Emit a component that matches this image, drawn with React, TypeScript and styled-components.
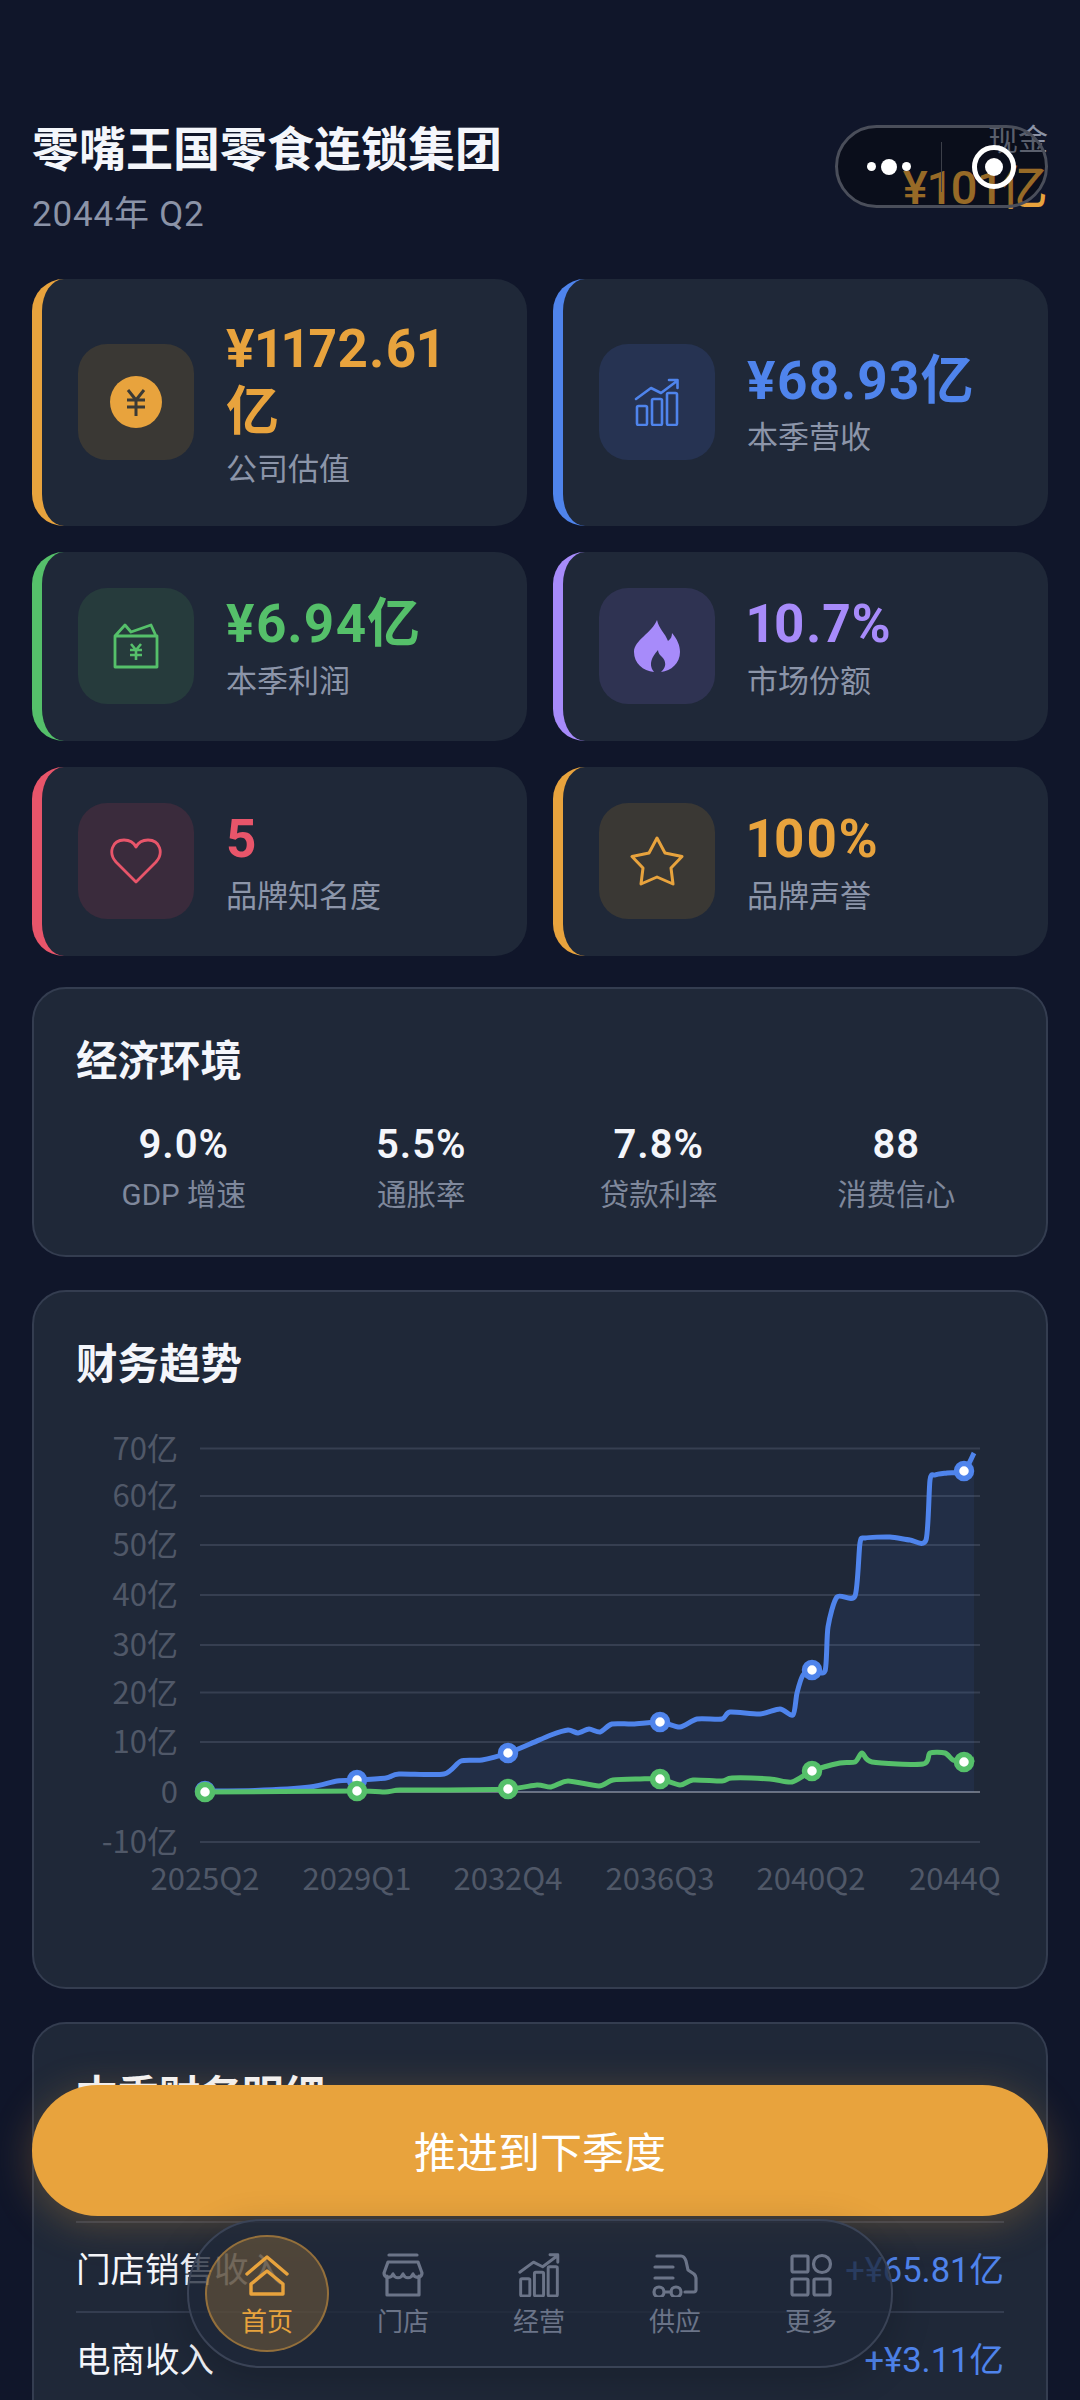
import React from 'react'
import styled, { createGlobalStyle } from 'styled-components'

const ORANGE = '#e8a33d'
const BLUE = '#4f84ec'
const GREEN = '#55c06a'
const PURPLE = '#a78bfa'
const RED = '#e8556a'

const GlobalStyle = createGlobalStyle`
  html, body {
    margin: 0;
    padding: 0;
    background: #10162a;
  }
  * {
    box-sizing: border-box;
  }
`

const Page = styled.div`
  position: relative;
  width: 1080px;
  height: 2400px;
  overflow: hidden;
  padding: 120px 32px 0;
  background: #10162a;
  font-family: Roboto, 'Noto Sans CJK SC', sans-serif;
  color: #f4f6fb;
`

const Header = styled.header`
  display: flex;
  justify-content: space-between;
  align-items: flex-start;
  margin-bottom: 40px;
`

const CompanyName = styled.h1`
  margin: 0;
  font-size: 47px;
  line-height: 60px;
  font-weight: 700;
`

const Period = styled.div`
  margin-top: 11px;
  font-size: 35px;
  line-height: 48px;
  letter-spacing: 0.8px;
  color: #8b93a7;
`

const CashBlock = styled.div`
  display: flex;
  flex-direction: column;
  align-items: flex-end;
`

const CashLabel = styled.div`
  font-size: 30px;
  line-height: 40px;
  color: #8b93a7;
`

const CashValue = styled.div`
  margin-top: -2px;
  font-size: 47px;
  line-height: 60px;
  font-weight: 500;
  letter-spacing: 0.5px;
  font-variant-numeric: proportional-nums;
  color: ${ORANGE};
`

const Capsule = styled.div`
  position: absolute;
  top: 125px;
  right: 32px;
  width: 213px;
  height: 83px;
  border: 3px solid #4a4e5a;
  border-radius: 42px;
  background: rgba(0, 0, 0, 0.35);
  display: flex;
  align-items: center;
`

const CapsuleSide = styled.div`
  width: 104px;
  display: flex;
  align-items: center;
  justify-content: center;
  gap: 5px;
`

const Dot = styled.span<{ $size: number }>`
  width: ${(p) => p.$size}px;
  height: ${(p) => p.$size}px;
  border-radius: 50%;
  background: #fff;
`

const CapsuleDivider = styled.span`
  width: 2px;
  height: 50px;
  background: #3c3f49;
`

const StatGrid = styled.div`
  display: grid;
  grid-template-columns: 1fr 1fr;
  gap: 26px;
  margin-bottom: 31.5px;
`

const StatCard = styled.div<{ $accent: string }>`
  display: flex;
  align-items: center;
  gap: 32px;
  min-height: 189px;
  padding: 36px;
  border-left: 10px solid ${(p) => p.$accent};
  border-radius: 32px;
  background: #1f2838;
`

const StatIcon = styled.div<{ $tint: string }>`
  flex: none;
  width: 116px;
  height: 116px;
  border-radius: 29px;
  background: ${(p) => p.$tint};
  display: flex;
  align-items: center;
  justify-content: center;
`

const StatValue = styled.div<{ $accent: string }>`
  max-width: 250px;
  padding-top: 3px;
  font-size: 53px;
  line-height: 63px;
  font-weight: 700;
  letter-spacing: 1px;
  font-variant-numeric: proportional-nums;
  color: ${(p) => p.$accent};
`

const StatLabel = styled.div`
  margin-top: 5.5px;
  font-size: 31px;
  line-height: 40px;
  color: #8c95a9;
`

const Section = styled.section`
  margin-bottom: 33px;
  padding: 46px 42px 41px;
  border: 2px solid #343d50;
  border-radius: 34px;
  background: #1f2838;
`

const SectionTitle = styled.h2`
  margin: 0;
  font-size: 41.5px;
  line-height: 54px;
  font-weight: 700;
`

const EconRow = styled.div`
  display: grid;
  grid-template-columns: repeat(4, 1fr);
  margin: 31px -11px 0;
`

const EconItem = styled.div`
  text-align: center;
`

const EconValue = styled.div`
  font-size: 40px;
  line-height: 50px;
  font-weight: 600;
  letter-spacing: 1px;
`

const EconLabel = styled.div`
  margin-top: 6px;
  font-size: 29.5px;
  line-height: 38px;
  color: #7f889c;
`

const ChartSvg = styled.svg`
  display: block;
  margin-top: 12px;
  font-family: 'Noto Sans CJK SC', sans-serif;
`

const DetailRow = styled.div`
  display: flex;
  justify-content: space-between;
  align-items: center;
  height: 90px;
  border-top: 2px solid #343d50;
  font-size: 34.5px;
`

const DetailValue = styled.span`
  color: ${BLUE};
  font-weight: 400;
`

const DetailList = styled.div`
  margin-top: 97px;
`

const AdvanceButton = styled.button`
  position: absolute;
  left: 32px;
  bottom: 184px;
  width: 1016px;
  height: 131px;
  padding: 0 0 3px;
  border: 0;
  border-radius: 66px;
  background: ${ORANGE};
  box-shadow: 0 8px 40px rgba(232, 163, 61, 0.28);
  color: #fff;
  font-family: inherit;
  font-size: 42px;
  font-weight: 400;
`

const BottomNav = styled.nav`
  position: absolute;
  left: 187px;
  bottom: 32px;
  width: 706px;
  height: 149px;
  padding: 14px 10px;
  display: flex;
  border: 2px solid #3a4356;
  border-radius: 75px;
  background: rgba(31, 40, 57, 0.78);
  box-shadow: 0 10px 40px rgba(0, 0, 0, 0.2);
`

const NavItem = styled.div`
  width: 136px;
  padding: 0 6px;
`

const NavInner = styled.div<{ $active?: boolean }>`
  height: 117px;
  display: flex;
  flex-direction: column;
  align-items: center;
  padding-top: 16px;
  border-radius: 50%;
  border: 2px solid ${(p) => (p.$active ? 'rgba(232, 163, 61, 0.45)' : 'transparent')};
  background: ${(p) => (p.$active ? 'rgba(232, 163, 61, 0.24)' : 'transparent')};
  color: ${(p) => (p.$active ? ORANGE : '#6b7488')};
`

const NavLabel = styled.div`
  margin-top: 8px;
  font-size: 26px;
  line-height: 34px;
`

const TintedGlyph = styled.span<{ $color: string }>`
  display: flex;
  color: ${(p) => p.$color};
`

function CoinIcon() {
  return (
    <svg width="52" height="52" viewBox="0 0 52 52">
      <circle cx="26" cy="26" r="26" fill={ORANGE} />
      <path d="M18 14l8 10 8-10M17 24h18M17 31h18M26 24v16" fill="none" stroke="#3b3a36" strokeWidth="3" />
    </svg>
  )
}

function BarsIcon({ size = 48, strokeWidth = 2.6 }: { size?: number; strokeWidth?: number }) {
  return (
    <svg width={size} height={size} viewBox="-1 0 48 48" fill="none" stroke="currentColor" strokeWidth={strokeWidth} strokeLinejoin="round" strokeLinecap="round">
      <rect x="3" y="28" width="10" height="19" rx="1.5" />
      <rect x="18" y="21" width="10" height="26" rx="1.5" />
      <rect x="33" y="15" width="10" height="32" rx="1.5" />
      <path d="M2 21L17 10l10 5L43 3M35 2h8.5v8" />
    </svg>
  )
}

function WalletIcon() {
  return (
    <svg width="46" height="46" viewBox="0 0 46 46" fill="none" stroke={GREEN} strokeWidth="2.8" strokeLinejoin="round">
      <path d="M2 13h42v31H2zM2 13L12 2l6 7 20-7 5 11" />
      <path d="M18 21l5 6 5-6M17 27h12M17 32h12M23 27v10" strokeWidth="2.6" />
    </svg>
  )
}

function FlameIcon() {
  return (
    <svg width="46" height="52" viewBox="0 0 46 52" fill={PURPLE}>
      <path d="M23 0C25 9 31 13 34 21C37 19 38 16 38 13C43 19 46 25 46 32C46 43 37 51 27 52C33 47 32 41 28 37C26 35 24 33 24 30C20 35 13 43 20 52C9 51 0 43 0 32C0 20 18 13 23 0Z" />
    </svg>
  )
}

function HeartIcon() {
  return (
    <svg width="54" height="48" viewBox="0 0 54 48" fill="none" stroke={RED} strokeWidth="2.8" strokeLinejoin="round">
      <path d="M27 45L7 25C-1 16 3 3 15 3C21 3 25 6 27 10C29 6 33 3 39 3C51 3 55 16 47 25Z" />
    </svg>
  )
}

function StarIcon() {
  return (
    <svg width="54" height="52" viewBox="0 0 54 52" fill="none" stroke={ORANGE} strokeWidth="3" strokeLinejoin="round">
      <path d="M27 3L35 18L52 21.500L41 33L43 49L27 42L11 49L13 33L2 21.500L19 18Z" />
    </svg>
  )
}

function HomeIcon() {
  return (
    <svg width="48" height="44" viewBox="0 0 48 44" fill="none" stroke="currentColor" strokeWidth="3.4" strokeLinejoin="round" strokeLinecap="round">
      <path d="M4 21L24 4l20 17" />
      <path d="M8 31L24 18l16 13v10H8z" />
    </svg>
  )
}

function StoreIcon() {
  return (
    <svg width="48" height="44" viewBox="0 0 48 44" fill="none" stroke="currentColor" strokeWidth="3.2" strokeLinejoin="round" strokeLinecap="round">
      <path d="M10 2h28" />
      <path d="M9 9h30l4 11c0 5-7 6-9 1-2 5-8 5-10 0-2 5-8 5-10 0-2 5-9 4-9-1z" />
      <path d="M8 23v19h32V23" />
    </svg>
  )
}

function TruckIcon() {
  return (
    <svg width="48" height="44" viewBox="0 0 48 44" fill="none" stroke="currentColor" strokeWidth="3.200" strokeLinejoin="round" strokeLinecap="round">
      <path d="M6 3h24c3 0 4 2 5 5l2 9 6 4c1 1 2 2 2 4v12c0 1-1 2-2 2h-9M20 39h-6" />
      <path d="M4 14h18M4 25h18" />
      <circle cx="8" cy="39" r="5" />
      <circle cx="25" cy="39" r="5" />
    </svg>
  )
}

function GridIcon() {
  return (
    <svg width="44" height="44" viewBox="0 0 44 44" fill="none" stroke="currentColor" strokeWidth="3.200" strokeLinejoin="round">
      <rect x="3" y="3" width="16" height="16" rx="1.500" />
      <circle cx="33" cy="11" r="8.500" />
      <rect x="3" y="26" width="16" height="16" rx="1.500" />
      <rect x="25" y="26" width="16" height="16" rx="1.500" />
    </svg>
  )
}

// coordinates are page pixels, the svg viewBox starts at 76,1404
const blueLine: [number, number][] = [
  [205, 1791], [255, 1790.5], [310, 1787], [337, 1781], [357, 1780], [386, 1778], [399, 1774], [444, 1774],
  [461, 1761], [482, 1760], [508, 1753], [530, 1744], [551, 1735], [568, 1730], [578, 1733], [589, 1729],
  [600, 1732], [612, 1724], [633, 1724], [660, 1722], [680, 1727], [697, 1719], [722, 1719], [730, 1712],
  [760, 1714], [780, 1709], [793, 1715], [797, 1693], [803, 1675], [812, 1670], [825, 1671], [828, 1627],
  [837, 1597], [855, 1596], [860, 1543], [865, 1538], [890, 1537], [910, 1540], [926, 1540], [930, 1480],
  [935, 1475], [947, 1473], [964, 1471], [974, 1453],
]

const greenLine: [number, number][] = [
  [205, 1792], [357, 1791], [385, 1792], [400, 1790], [440, 1790], [508, 1789], [537, 1785], [551, 1787],
  [568, 1781], [599, 1786], [613, 1780], [640, 1779], [660, 1779], [680, 1785], [693, 1780], [722, 1781],
  [732, 1778], [770, 1779], [792, 1782], [812, 1771], [840, 1763], [855, 1762], [862, 1753], [872, 1762],
  [923, 1764], [930, 1753], [945, 1753], [953, 1760], [964, 1762], [974, 1759],
]

const blueMarkers = [[205, 1791], [357, 1780], [508, 1753], [660, 1722], [812, 1670], [964, 1471]]
const greenMarkers = [[205, 1792], [357, 1791], [508, 1789], [660, 1779], [812, 1771], [964, 1762]]

const yAxis = [
  ['70亿', 1448.5], ['60亿', 1496], ['50亿', 1545], ['40亿', 1595], ['30亿', 1645],
  ['20亿', 1692.5], ['10亿', 1742], ['0', 1792], ['-10亿', 1842],
] as const

const xAxis = [
  ['2025Q2', 205], ['2029Q1', 357], ['2032Q4', 508], ['2036Q3', 660], ['2040Q2', 811],
] as const

function smooth(points: [number, number][]) {
  let d = `M${points[0][0]} ${points[0][1]}`
  for (let i = 0; i < points.length - 1; i++) {
    const p0 = points[Math.max(i - 1, 0)]
    const p1 = points[i]
    const p2 = points[i + 1]
    const p3 = points[Math.min(i + 2, points.length - 1)]
    const c1x = p1[0] + (p2[0] - p0[0]) / 8
    const c1y = p1[1] + (p2[1] - p0[1]) / 8
    const c2x = p2[0] - (p3[0] - p1[0]) / 8
    const c2y = p2[1] - (p3[1] - p1[1]) / 8
    d += `C${c1x} ${c1y} ${c2x} ${c2y} ${p2[0]} ${p2[1]}`
  }
  return d
}

function TrendChart() {
  const bluePath = smooth(blueLine)
  return (
    <ChartSvg width="924" height="542" viewBox="76 1404 924 542">
      {yAxis.map(([label, y]) => (
        <g key={label}>
          <line x1="200" x2="980" y1={y} y2={y} stroke={label === '0' ? '#6b7280' : '#363f51'} strokeWidth="2" />
          <text x="178" y={y + 11} textAnchor="end" fontSize="31" fill="#505868">
            {label}
          </text>
        </g>
      ))}
      {xAxis.map(([label, x]) => (
        <text key={label} x={x} y="1890" textAnchor="middle" fontSize="31" fill="#505868">
          {label}
        </text>
      ))}
      <text x="909" y="1890" fontSize="31" fill="#505868">
        2044Q
      </text>
      <path d={`${bluePath}L974 1792L205 1792Z`} fill={BLUE} fillOpacity="0.08" />
      <path d={bluePath} fill="none" stroke={BLUE} strokeWidth="5" />
      {blueMarkers.map(([x, y]) => (
        <circle key={x} cx={x} cy={y} r="7.5" fill="#fff" stroke={BLUE} strokeWidth="5.5" />
      ))}
      <path d={smooth(greenLine)} fill="none" stroke={GREEN} strokeWidth="5" />
      {greenMarkers.map(([x, y]) => (
        <circle key={x} cx={x} cy={y} r="7.5" fill="#fff" stroke={GREEN} strokeWidth="5.5" />
      ))}
    </ChartSvg>
  )
}

const stats = [
  { value: '¥1172.61亿', label: '公司估值', accent: ORANGE, tint: '#3a3834', icon: <CoinIcon /> },
  { value: '¥68.93亿', label: '本季营收', accent: BLUE, tint: '#263352', icon: <TintedGlyph $color={BLUE}><BarsIcon /></TintedGlyph> },
  { value: '¥6.94亿', label: '本季利润', accent: GREEN, tint: '#263b3c', icon: <WalletIcon /> },
  { value: '10.7%', label: '市场份额', accent: PURPLE, tint: '#2f3352', icon: <FlameIcon /> },
  { value: '5', label: '品牌知名度', accent: RED, tint: '#3a2b3c', icon: <HeartIcon /> },
  { value: '100%', label: '品牌声誉', accent: ORANGE, tint: '#3a3834', icon: <StarIcon /> },
]

const economy = [
  { value: '9.0%', label: 'GDP 增速' },
  { value: '5.5%', label: '通胀率' },
  { value: '7.8%', label: '贷款利率' },
  { value: '88', label: '消费信心' },
]

const navItems = [
  { label: '首页', icon: <HomeIcon />, active: true },
  { label: '门店', icon: <StoreIcon /> },
  { label: '经营', icon: <BarsIcon size={44} strokeWidth={3.2} /> },
  { label: '供应', icon: <TruckIcon /> },
  { label: '更多', icon: <GridIcon /> },
]

export default function App() {
  return (
    <Page>
      <GlobalStyle />
      <Header>
        <div>
          <CompanyName>零嘴王国零食连锁集团</CompanyName>
          <Period>2044年 Q2</Period>
        </div>
        <CashBlock>
          <CashLabel>现金</CashLabel>
          <CashValue>¥101亿</CashValue>
        </CashBlock>
      </Header>

      <StatGrid>
        {stats.map((s) => (
          <StatCard key={s.label} $accent={s.accent}>
            <StatIcon $tint={s.tint}>{s.icon}</StatIcon>
            <div>
              <StatValue $accent={s.accent}>{s.value}</StatValue>
              <StatLabel>{s.label}</StatLabel>
            </div>
          </StatCard>
        ))}
      </StatGrid>

      <Section>
        <SectionTitle>经济环境</SectionTitle>
        <EconRow>
          {economy.map((e) => (
            <EconItem key={e.label}>
              <EconValue>{e.value}</EconValue>
              <EconLabel>{e.label}</EconLabel>
            </EconItem>
          ))}
        </EconRow>
      </Section>

      <Section>
        <SectionTitle>财务趋势</SectionTitle>
        <TrendChart />
      </Section>

      <Section>
        <SectionTitle>本季财务明细</SectionTitle>
        <DetailList>
          <DetailRow>
            门店销售收入
            <DetailValue>+¥65.81亿</DetailValue>
          </DetailRow>
          <DetailRow>
            电商收入
            <DetailValue>+¥3.11亿</DetailValue>
          </DetailRow>
        </DetailList>
      </Section>

      <Capsule>
        <CapsuleSide>
          <Dot $size={9} />
          <Dot $size={16} />
          <Dot $size={9} />
        </CapsuleSide>
        <CapsuleDivider />
        <CapsuleSide>
          <svg width="44" height="44" viewBox="0 0 44 44">
            <circle cx="22" cy="22" r="19.500" fill="none" stroke="#fff" strokeWidth="5" />
            <circle cx="22" cy="22" r="9" fill="#fff" />
          </svg>
        </CapsuleSide>
      </Capsule>

      <AdvanceButton>推进到下季度</AdvanceButton>

      <BottomNav>
        {navItems.map((n) => (
          <NavItem key={n.label}>
            <NavInner $active={n.active}>
              {n.icon}
              <NavLabel>{n.label}</NavLabel>
            </NavInner>
          </NavItem>
        ))}
      </BottomNav>
    </Page>
  )
}
